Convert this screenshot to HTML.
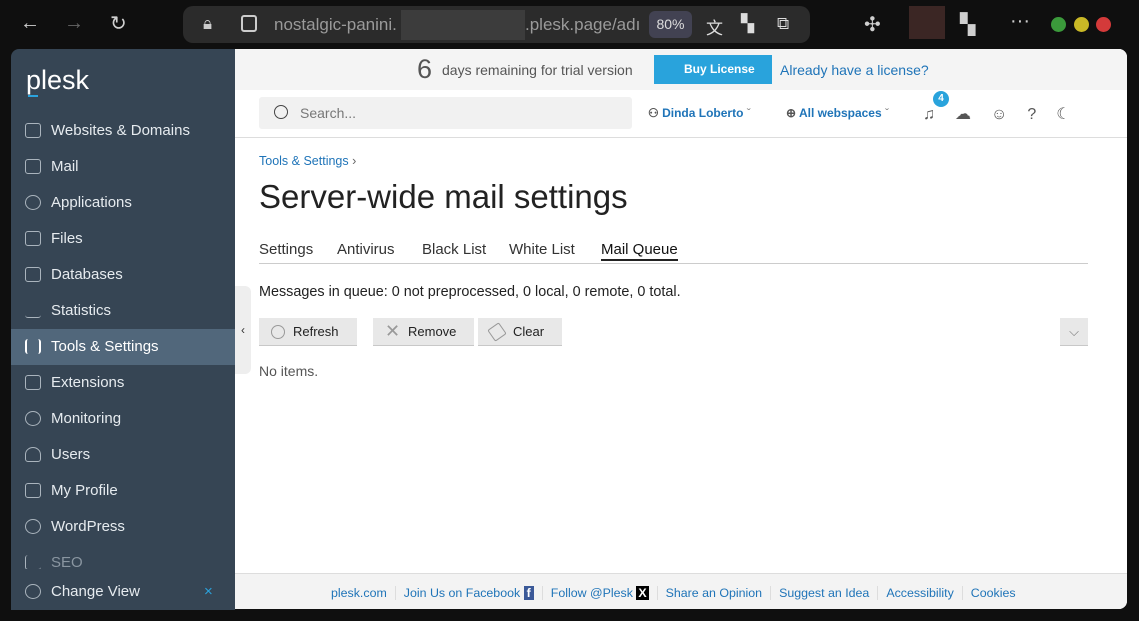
<!DOCTYPE html>
<html><head><meta charset="utf-8"><style>
*{box-sizing:border-box;margin:0;padding:0}
body{width:1139px;height:621px;background:#0f0f0f;font-family:"Liberation Sans",sans-serif;position:relative;overflow:hidden}
.abs{position:absolute}
.url{left:183px;top:6px;width:627px;height:37px;background:#2b2b2b;border-radius:10px;color:#9a9a9a;font-size:17px}
.ic{color:#cfcfcf;font-size:20px}
.side{left:11px;top:49px;width:224px;height:560px;background:#364554;border-radius:8px 0 0 8px}
.nav{position:absolute;left:0;width:224px;height:36px;color:#e6ebef;font-size:15px;line-height:36px;padding-left:40px}
.nav i{position:absolute;left:14px;top:10px;width:16px;height:15px;border:1.5px solid #aab4bd;border-radius:3px}
.main{left:235px;top:49px;width:892px;height:560px;background:#fff;border-radius:0 8px 8px 0;overflow:hidden}
.btn{position:absolute;top:269px;height:28px;background:#e8e8e8;border-bottom:1px solid #c8c8c8;font-size:13px;color:#222;line-height:28px}
.btn s{position:absolute;left:12px;top:7px;width:14px;height:14px;border:1.5px solid #999;border-radius:50%}
.tab{position:absolute;top:192px;font-size:15px;color:#333}
.ft a{color:#1f74b8;text-decoration:none;padding:0 8px;border-right:1px solid #ddd}
</style></head><body>
<div class="abs ic" style="left:20px;top:12px">←</div>
<div class="abs ic" style="left:64px;top:12px;color:#666">→</div>
<div class="abs ic" style="left:110px;top:11px">↻</div>
<div class="abs url"><span class="abs" style="left:20px;top:8px;color:#ccc">🔒︎</span><span class="abs" style="left:58px;top:9px;width:16px;height:17px;border:2px solid #ccc;border-radius:3px"></span>
<span class="abs" style="left:91px;top:9px">nostalgic-panini.</span><span class="abs" style="left:218px;top:4px;width:124px;height:30px;background:#3c3c3c"></span><span class="abs" style="left:342px;top:9px">.plesk.page/adı</span>
<span class="abs" style="left:466px;top:5px;width:43px;height:27px;background:#424252;border-radius:6px;color:#ddd;font-size:14px;text-align:center;line-height:27px">80%</span>
<span class="abs" style="left:523px;top:8px;color:#ddd">文</span><span class="abs" style="left:558px;top:8px;color:#ddd">▚</span><span class="abs" style="left:594px;top:8px;color:#ddd">⧉</span></div>
<div class="abs ic" style="left:864px;top:12px">✣</div>
<div class="abs" style="left:909px;top:6px;width:36px;height:33px;background:#3b2624"></div>
<div class="abs ic" style="left:960px;top:12px">▚</div>
<div class="abs ic" style="left:1010px;top:10px">···</div>
<div class="abs" style="left:1051px;top:17px;width:15px;height:15px;border-radius:50%;background:#3b9a3b"></div>
<div class="abs" style="left:1074px;top:17px;width:15px;height:15px;border-radius:50%;background:#c9b826"></div>
<div class="abs" style="left:1096px;top:17px;width:15px;height:15px;border-radius:50%;background:#d43a3a"></div>

<div class="abs side">
<div class="abs" style="left:15px;top:16px;color:#fff;font-size:27px">plesk</div>
<div class="abs" style="left:17px;top:46px;width:10px;height:2px;background:#2ba3dd"></div>
<div class="nav" style="top:64px"><i></i>Websites &amp; Domains</div>
<div class="nav" style="top:100px"><i></i>Mail</div>
<div class="nav" style="top:136px"><i style="border-radius:50%"></i>Applications</div>
<div class="nav" style="top:172px"><i></i>Files</div>
<div class="nav" style="top:208px"><i></i>Databases</div>
<div class="nav" style="top:244px"><i style="border-width:0 0 1.5px 0"></i>Statistics</div>
<div class="nav" style="top:280px;background:#51677b;color:#fff">
<i style="border:none;border-left:2px solid #fff;border-right:2px solid #fff"></i>Tools &amp; Settings</div>
<div class="nav" style="top:316px"><i></i>Extensions</div>
<div class="nav" style="top:352px"><i style="border-radius:50%"></i>Monitoring</div>
<div class="nav" style="top:388px"><i style="border-radius:50% 50% 3px 3px"></i>Users</div>
<div class="nav" style="top:424px"><i></i>My Profile</div>
<div class="nav" style="top:460px"><i style="border-radius:50%"></i>WordPress</div>
<div class="nav" style="top:496px;color:#8a96a1;height:24px;overflow:hidden"><i style="border-width:0 0 1.5px 1.5px"></i>SEO</div>
<div class="nav" style="top:525px;background:#364554"><i style="border-radius:50%"></i>Change View<span style="position:absolute;left:193px;color:#2ba3dd">×</span></div>
</div>

<div class="abs" style="left:235px;top:286px;width:16px;height:88px;background:#eee;border-radius:0 6px 6px 0;font-size:12px;line-height:88px;text-align:center;color:#333;z-index:2">‹</div>

<div class="abs main">
<div class="abs" style="left:0;top:0;width:892px;height:41px;background:#f4f4f4"></div>
<div class="abs" style="left:182px;top:5px;font-size:27px;color:#555">6</div>
<div class="abs" style="left:207px;top:13px;font-size:14px;color:#555">days remaining for trial version</div>
<div class="abs" style="left:419px;top:6px;width:118px;height:29px;background:#29a3dc;color:#fff;font-size:12px;font-weight:bold;line-height:29px;padding-left:30px">Buy License</div>
<div class="abs" style="left:545px;top:13px;font-size:14px;color:#1f74b8">Already have a license?</div>
<div class="abs" style="left:24px;top:48px;width:373px;height:32px;background:#f1f1f1;border-radius:3px;color:#777;font-size:14px;line-height:32px;padding-left:41px">Search...
<span class="abs" style="left:15px;top:8px;width:14px;height:14px;border:1.5px solid #444;border-radius:50%"></span></div>
<div class="abs" style="left:413px;top:57px;font-size:12px;color:#1f74b8;font-weight:bold"><span style="color:#555">⚇ </span>Dinda Loberto <span style="color:#888;font-weight:normal">ˇ</span></div>
<div class="abs" style="left:551px;top:57px;font-size:12px;color:#1f74b8;font-weight:bold"><span style="color:#555">⊕ </span>All webspaces <span style="color:#888;font-weight:normal">ˇ</span></div>
<div class="abs" style="left:698px;top:42px;width:16px;height:16px;border-radius:50%;background:#29a3dc;color:#fff;font-size:10px;font-weight:bold;text-align:center;line-height:16px">4</div>
<div class="abs" style="left:688px;top:55px;font-size:16px;color:#555;letter-spacing:20px">♫☁☺?☾</div>
<div class="abs" style="left:0;top:88px;width:892px;height:1px;background:#ddd"></div>
<div class="abs" style="left:24px;top:105px;font-size:12.5px;color:#1f74b8">Tools &amp; Settings <span style="color:#666">›</span></div>
<div class="abs" style="left:24px;top:129px;font-size:33px;color:#222">Server-wide mail settings</div>
<div class="tab" style="left:24px">Settings</div><div class="tab" style="left:102px">Antivirus</div>
<div class="tab" style="left:187px">Black List</div><div class="tab" style="left:274px">White List</div>
<div class="tab" style="left:366px;color:#111;border-bottom:2px solid #222;padding-bottom:1px">Mail Queue</div>
<div class="abs" style="left:24px;top:214px;width:829px;height:1px;background:#ccc"></div>
<div class="abs" style="left:24px;top:235px;font-size:14.4px;color:#222">Messages in queue: 0 not preprocessed, 0 local, 0 remote, 0 total.</div>
<div class="btn" style="left:24px;width:98px;padding-left:34px"><s></s>Refresh</div>
<div class="btn" style="left:138px;width:101px;padding-left:35px"><s style="border:none;color:#999;font-size:18px;line-height:14px;text-decoration:none;top:6px">✕</s>Remove</div>
<div class="btn" style="left:243px;width:84px;padding-left:35px"><s style="border-radius:2px;transform:rotate(-35deg)"></s>Clear</div>
<div class="btn" style="left:825px;width:28px;text-align:center;color:#777">⌵</div>
<div class="abs" style="left:24px;top:314px;font-size:14px;color:#555">No items.</div>
<div class="abs" style="left:0;top:524px;width:892px;height:36px;background:#f3f3f3;border-top:1px solid #ddd"></div>
<div class="abs ft" style="left:88px;top:537px;font-size:12.4px">
<a>plesk.com</a><a>Join Us on Facebook <b style="background:#3b5998;color:#fff;padding:0 3px">f</b></a><a>Follow @Plesk <b style="background:#000;color:#fff;padding:0 2px">X</b></a><a>Share an Opinion</a><a>Suggest an Idea</a><a>Accessibility</a><a style="border:none">Cookies</a></div>
</div>
</body></html>
